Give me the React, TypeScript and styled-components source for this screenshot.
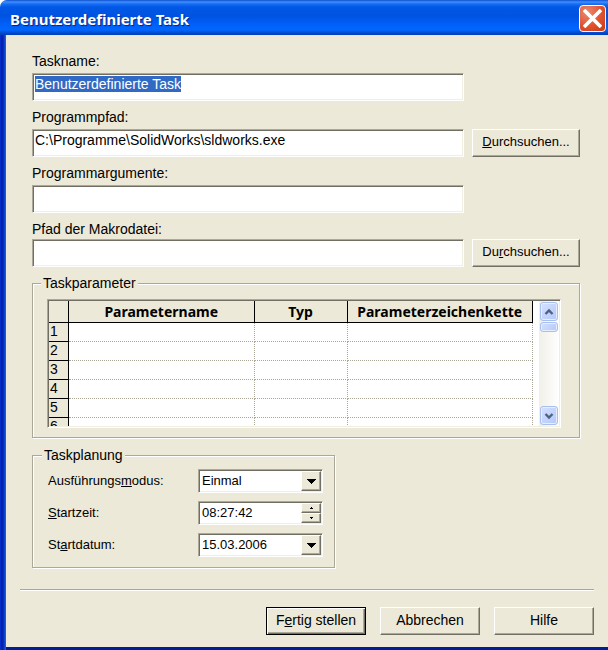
import React, { useEffect, useRef } from "react";
import styled, { createGlobalStyle, css } from "styled-components";

const face = "#ece9d8";
const shade = "#aca899";
const dark = "#716f64";

const GlobalStyle = createGlobalStyle`
  *, *::before, *::after { box-sizing: border-box; }
  body {
    margin: 0;
    background: #ffffff;
    font: 14px/16px "Liberation Sans", Arial, sans-serif;
    color: #000000;
  }
  button, input, select { font: inherit; color: inherit; margin: 0; }
`;

const Dialog = styled.form`
  display: flex;
  flex-direction: column;
  min-height: 100vh;
  background: ${face};
  border-radius: 7px 0 0 0;
  overflow: hidden;
`;

const TitleBar = styled.header`
  display: flex;
  align-items: center;
  justify-content: space-between;
  height: 35px;
  padding: 2px 2px 0 10px;
  background: linear-gradient(
    #0f4fd0 0, #3f90ff 2px, #1a6cf5 4px, #0058e6 7px, #0053e1 16px,
    #0061fa 25px, #0066ff 30px, #0052dc 32px, #003cb4 35px
  );
`;

const Title = styled.h1`
  margin: 0;
  font: bold 15px/20px "Noto Sans", sans-serif;
  color: #ffffff;
  text-shadow: 1px 1px 1px #0a1f80;
`;

const CloseButton = styled.button`
  display: flex;
  width: 27px;
  height: 27px;
  padding: 0;
  border: 1px solid #ffffff;
  border-radius: 4px;
  background: radial-gradient(circle at 30% 25%, #ea8b70 0, #e0522f 55%, #c63a12 100%);
  align-items: center;
  justify-content: center;
`;

const Frame = styled.div`
  display: flex;
  flex-direction: column;
  flex: 1;
  border-style: solid;
  border-width: 0 0 3px 6px;
  border-color: #001ea0;
  border-image: linear-gradient(90deg, #0831d9 0, #001ea0 2px, #0a35c8 4px, #166aee 6px, #001e96 6px) 0 0 3 6;
`;

const Content = styled.main`
  display: flex;
  flex-direction: column;
  padding: 18px 28px 21px 26px;
`;

const Field = styled.div<{ $tight?: boolean }>`
  display: grid;
  grid-template-columns: 1fr 108px;
  grid-template-rows: ${(p) => (p.$tight ? 18 : 20)}px 28px;
  column-gap: 8px;
  margin-bottom: 8px;
  & > button { font-size: 13px; }
`;

const FieldLabel = styled.label`
  grid-column: 1 / -1;
`;

const sunken = css`
  border: 1px solid;
  border-color: ${shade} #ffffff #ffffff ${shade};
  box-shadow: inset 1px 1px ${dark}, inset -1px -1px #f1efe2;
  background: #ffffff;
`;

const TextInput = styled.input`
  ${sunken}
  width: 100%;
  min-width: 0;
  padding: 1px 2px 7px;
  outline: none;
  border-radius: 0;
  &::selection { background: #316ac5; color: #ffffff; }
`;

const PushButton = styled.button<{ $primary?: boolean }>`
  height: 28px;
  padding: 0 0 2px;
  border-style: solid;
  border-color: ${(p) => (p.$primary ? "#000000" : `#ffffff ${dark} ${dark} #ffffff`)};
  border-width: 1px;
  border-radius: 0;
  background: ${face};
  box-shadow: ${(p) =>
    p.$primary
      ? `inset 1px 1px #ffffff, inset -1px -1px ${dark}, inset -2px -2px ${shade}`
      : `inset -1px -1px ${shade}`};
`;

const Group = styled.fieldset`
  min-width: 0;
  margin: 0;
  border: 1px solid ${shade};
  box-shadow: 1px 1px #ffffff, inset 1px 1px #ffffff;
`;

const Legend = styled.legend`
  margin-left: -6px;
  padding: 0 2px;
  background: ${face};
`;

const ParameterGroup = styled(Group)`
  margin-bottom: 9px;
  padding: 8px 18px 9px 14px;
`;

const ScheduleGroup = styled(Group)`
  width: 303px;
  padding: 6px 11px 10px 15px;
  font-size: 13px;
  & > legend { font-size: 14px; }
`;

const GridBox = styled.div`
  ${sunken}
  display: flex;
  height: 129px;
  padding: 1px;
`;

const TableClip = styled.div`
  flex: 1;
  overflow: hidden;
  margin-right: 6px;
`;

const Table = styled.table`
  width: 100%;
  table-layout: fixed;
  border-collapse: separate;
  border-spacing: 0;
`;

const HeadCell = styled.th<{ $width?: number }>`
  width: ${(p) => (p.$width ? `${p.$width}px` : "auto")};
  height: 22px;
  padding: 0;
  border-right: 1px solid #000000;
  border-bottom: 1px solid #000000;
  background: ${face};
  font: bold 14px/20px "Noto Sans", sans-serif;
`;

const RowHead = styled.th`
  height: 19px;
  padding: 0 0 2px 1px;
  border-right: 1px solid #000000;
  border-bottom: 1px solid #000000;
  background: ${face};
  font-weight: normal;
  text-align: left;
`;

const Cell = styled.td`
  padding: 0;
  border-right: 1px dotted ${shade};
  border-bottom: 1px dotted ${shade};
`;

const ScrollTrack = styled.div`
  display: flex;
  flex-direction: column;
  width: 20px;
  padding: 1px 0 0 1px;
  background: linear-gradient(90deg, #f0efe8, #ffffff);
`;

const ScrollPart = styled.button<{ $height: number; $last?: boolean }>`
  display: flex;
  align-items: center;
  justify-content: center;
  width: 18px;
  height: ${(p) => p.$height}px;
  margin: ${(p) => (p.$last ? "auto" : "0")} 0 1px;
  padding: 0;
  border: 1px solid #a9bff0;
  border-radius: 3px;
  background: linear-gradient(135deg, #d3e0ff, #b4c8f8);
  box-shadow: inset 0 0 0 1px #e6eeff;
`;

const ScheduleRow = styled.div`
  display: grid;
  grid-template-columns: 1fr 125px;
  align-items: center;
  height: 24px;
  margin-bottom: 8px;
  &:last-child { margin-bottom: 0; }
`;

const Combo = styled.div`
  ${sunken}
  display: grid;
  grid-template-columns: 1fr 20px;
  height: 24px;
  padding: 1px;
`;

const ComboSelect = styled.select`
  grid-area: 1 / 1 / 2 / 3;
  appearance: none;
  min-width: 0;
  padding: 0 2px;
  border: 0;
  border-radius: 0;
  background: transparent;
  outline: none;
`;

const ComboInput = styled.input`
  min-width: 0;
  padding: 0 2px;
  border: 0;
  background: transparent;
  outline: none;
`;

const raised = css`
  display: flex;
  align-items: center;
  justify-content: center;
  padding: 0;
  border: 1px solid;
  border-color: #ffffff ${dark} ${dark} #ffffff;
  border-radius: 0;
  background: ${face};
  box-shadow: inset -1px -1px ${shade};
`;

const DropFace = styled.span`
  ${raised}
  grid-area: 1 / 2;
  pointer-events: none;
`;

const DropButton = styled.button`
  ${raised}
`;

const Spinner = styled.div`
  display: grid;
  grid-template-rows: 1fr 1fr;
`;

const SpinButton = styled.button`
  ${raised}
  min-height: 0;
`;

const Separator = styled.hr`
  width: auto;
  height: 2px;
  margin: 0 14px;
  border: 0;
  border-top: 1px solid ${shade};
  border-bottom: 1px solid #ffffff;
`;

const Footer = styled.footer`
  display: flex;
  flex-wrap: wrap;
  justify-content: flex-end;
  gap: 14px;
  padding: 16px 14px 12px;
  & > button { width: 100px; }
`;

const Triangle = ({ up, small }: { up?: boolean; small?: boolean }) => (
  <svg width={small ? 3 : 9} height={small ? 2 : 5} viewBox="0 0 9 5" preserveAspectRatio="none" shapeRendering="crispEdges" aria-hidden="true">
    <path d={up ? "M0 5 4.5 0 9 5Z" : "M0 0H9L4.5 5Z"} fill="#000000" />
  </svg>
);

const Chevron = ({ up }: { up?: boolean }) => (
  <svg width="10" height="8" viewBox="0 0 10 8" aria-hidden="true">
    <path d={up ? "M1.5 6 5 2.5 8.5 6" : "M1.5 2 5 5.5 8.5 2"} fill="none" stroke="#4d6185" strokeWidth="2.4" />
  </svg>
);

const rows = [1, 2, 3, 4, 5, 6];

export default function App() {
  const nameRef = useRef<HTMLInputElement>(null);

  useEffect(() => {
    nameRef.current?.focus();
    nameRef.current?.select();
  }, []);

  return (
    <>
      <GlobalStyle />
      <Dialog onSubmit={(e) => e.preventDefault()}>
        <TitleBar>
          <Title>Benutzerdefinierte Task</Title>
          <CloseButton type="button" aria-label="Schließen">
            <svg width="19" height="19" viewBox="0 0 19 19" aria-hidden="true">
              <path d="M1 1 18 18M18 1 1 18" stroke="#ffffff" strokeWidth="3.6" />
            </svg>
          </CloseButton>
        </TitleBar>
        <Frame>
          <Content>
            <Field>
              <FieldLabel htmlFor="name">Taskname:</FieldLabel>
              <TextInput id="name" ref={nameRef} defaultValue="Benutzerdefinierte Task" />
            </Field>
            <Field>
              <FieldLabel htmlFor="program">Programmpfad:</FieldLabel>
              <TextInput id="program" defaultValue="C:\Programme\SolidWorks\sldworks.exe" />
              <PushButton type="button"><u>D</u>urchsuchen...</PushButton>
            </Field>
            <Field>
              <FieldLabel htmlFor="args">Programmargumente:</FieldLabel>
              <TextInput id="args" />
            </Field>
            <Field $tight>
              <FieldLabel htmlFor="macro">Pfad der Makrodatei:</FieldLabel>
              <TextInput id="macro" />
              <PushButton type="button">Du<u>r</u>chsuchen...</PushButton>
            </Field>

            <ParameterGroup>
              <Legend>Taskparameter</Legend>
              <GridBox>
                <TableClip>
                  <Table>
                    <thead>
                      <tr>
                        <HeadCell $width={20} />
                        <HeadCell scope="col">Parametername</HeadCell>
                        <HeadCell scope="col" $width={93}>Typ</HeadCell>
                        <HeadCell scope="col">Parameterzeichenkette</HeadCell>
                      </tr>
                    </thead>
                    <tbody>
                      {rows.map((n) => (
                        <tr key={n}>
                          <RowHead scope="row">{n}</RowHead>
                          <Cell />
                          <Cell />
                          <Cell />
                        </tr>
                      ))}
                    </tbody>
                  </Table>
                </TableClip>
                <ScrollTrack>
                  <ScrollPart type="button" $height={19} aria-label="Nach oben"><Chevron up /></ScrollPart>
                  <ScrollPart type="button" $height={10} aria-label="Bildlauffeld" />
                  <ScrollPart type="button" $height={19} $last aria-label="Nach unten"><Chevron /></ScrollPart>
                </ScrollTrack>
              </GridBox>
            </ParameterGroup>

            <ScheduleGroup>
              <Legend>Taskplanung</Legend>
              <ScheduleRow>
                <label htmlFor="mode">Ausführungs<u>m</u>odus:</label>
                <Combo>
                  <ComboSelect id="mode"><option>Einmal</option></ComboSelect>
                  <DropFace><Triangle /></DropFace>
                </Combo>
              </ScheduleRow>
              <ScheduleRow>
                <label htmlFor="time"><u>S</u>tartzeit:</label>
                <Combo>
                  <ComboInput id="time" defaultValue="08:27:42" />
                  <Spinner>
                    <SpinButton type="button" aria-label="Später"><Triangle up small /></SpinButton>
                    <SpinButton type="button" aria-label="Früher"><Triangle small /></SpinButton>
                  </Spinner>
                </Combo>
              </ScheduleRow>
              <ScheduleRow>
                <label htmlFor="date">St<u>a</u>rtdatum:</label>
                <Combo>
                  <ComboInput id="date" defaultValue="15.03.2006" />
                  <DropButton type="button" aria-label="Kalender öffnen"><Triangle /></DropButton>
                </Combo>
              </ScheduleRow>
            </ScheduleGroup>
          </Content>
          <Separator />
          <Footer>
            <PushButton type="submit" $primary>F<u>e</u>rtig stellen</PushButton>
            <PushButton type="button">Abbrechen</PushButton>
            <PushButton type="button">Hilfe</PushButton>
          </Footer>
        </Frame>
      </Dialog>
    </>
  );
}
